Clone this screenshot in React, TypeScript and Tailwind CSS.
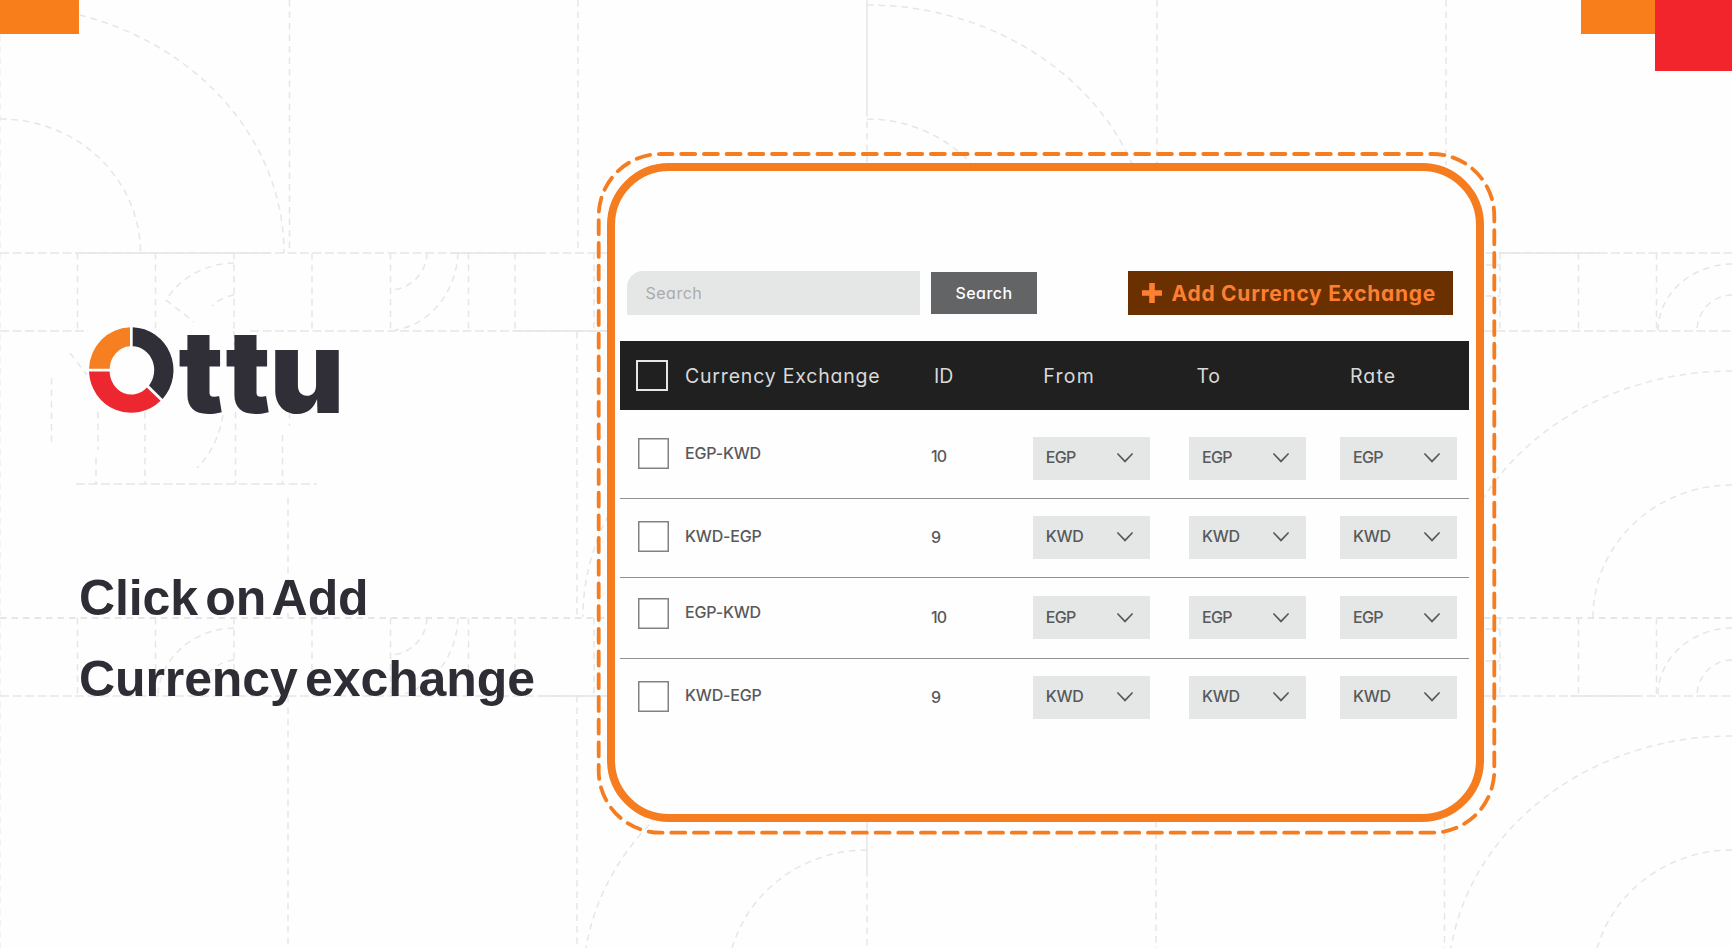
import React from "react";

const FONT = "font-[Inter,'Noto_Sans',sans-serif]";

function Grid() {
  const strip = [77.5, 155.5, 234, 312, 390.5, 468.5, 515, 594, 1500, 1578.5, 1656.5];
  return (
    <svg className="absolute inset-0" width="1732" height="948" viewBox="0 0 1732 948" fill="none" stroke="#e6e6e7" strokeWidth="1.5" strokeDasharray="6.5 5">
      {[289.5, 578].map((x) => <path key={x} d={`M${x} 0V253`} />)}
      {[1157, 1446].map((x) => <path key={x} d={`M${x} 0V165`} />)}
      <path d="M867 0V110" strokeDasharray="none" />
      <path d="M867 110V163" />
      <path d="M0 0V948" strokeWidth="1" />
      <path d="M577 332V617M577 696V948M288 498V617M288 696V948M867 870V948M1156 821V948M1444.5 821V948" />
      <path d="M867 821V870" strokeDasharray="none" />
      <path d="M0 253H607M1486 253H1732M0 331H88M250 331H607M1484 331H1732M76 484H317M0 696H607M1484 696H1732" strokeDasharray="9 3.5" />
      <path d="M80 253H270M450 253H540M515 331H607M1500 253H1600M540 696H607M1570 696H1640" strokeDasharray="none" />
      <path d="M0 618H607M1484 618H1732" strokeWidth="2" />
      {strip.map((x) => <path key={x} d={`M${x} 253V331M${x} 618V696`} />)}
      <path d="M0 119A140 134 0 0 1 140.5 253M0 5A284 248 0 0 1 284 253" />
      <path d="M867 119A140 134 0 0 1 1007 253M867 5A284 248 0 0 1 1151 253" />
      <path d="M1732 371A284 246 0 0 0 1448 617M1732 485A139 132 0 0 0 1593 617M867 371A284 246 0 0 0 583 617" />
      <path d="M867 736A284 248 0 0 0 583 984M867 850A140 134 0 0 0 727 984M1732 736A284 248 0 0 0 1448 984M1732 850A140 134 0 0 0 1592 984" />
      <path d="M234 263A80 75 0 0 0 166 300L194 322M234 295A40 36 0 0 0 212 306M234 331V345" />
      <path d="M427 253A38 38 0 0 1 390 290M458 253A72 82 0 0 1 395 330" />
      <path d="M427 618A38 38 0 0 1 390 655M458 618A72 82 0 0 1 395 696" />
      <path d="M234 628A78 70 0 0 0 158 696M234 660A40 36 0 0 0 200 690" />
      <path d="M1732 264A75 67 0 0 0 1658 331M1732 295A35 36 0 0 0 1697 331M1732 628A75 67 0 0 0 1658 696M1732 660A35 36 0 0 0 1697 696" />
      <path d="M1486 265H1500M1486 296H1500M1486 629H1500M1486 661H1500" />
      <path d="M51.5 378V443M98 412V450M96 458V484M145 412V484M235.5 412V484M282.5 435V484M289.5 412V426M223 415A70 90 0 0 1 197 468M70 353L87 375" />
    </svg>
  );
}

function Logo() {
  return (
    <svg className="block" width="280" height="190" viewBox="85 270 280 190" role="img" aria-label="Ottu">
      <path fill="#f68021" d="M89 368.7A42.3 43 0 0 1 130 327.2V346.3A21.5 23.7 0 0 0 109.6 368.7Z" />
      <path fill="#ec272f" d="M89 371.6H109.6A21.7 23.7 0 0 0 146.8 387.4L160.6 400.8A42.3 43 0 0 1 89 371.6Z" />
      <path fill="#302f38" d="M132.7 327.2A42.3 43 0 0 1 162.6 399L149 385.4A21.7 23.7 0 0 0 132.7 346.3Z" />
      <g fill="#302f38" fontFamily="Inter" fontWeight="900" fontSize="115">
        <text x="178.5" y="413" textLength="45" lengthAdjust="spacingAndGlyphs">t</text>
        <text x="225.5" y="413" textLength="45" lengthAdjust="spacingAndGlyphs">t</text>
        <text x="269.5" y="413" textLength="75" lengthAdjust="spacingAndGlyphs">u</text>
      </g>
    </svg>
  );
}

function Select({ value }: { value: string }) {
  return (
    <div className="flex h-[43px] w-[117px] items-center justify-between bg-[#e5e7e6] pl-[13px] pr-[17px]">
      <span className={`relative -top-px text-[16px] leading-none ${value === "EGP" ? "tracking-[-0.7px]" : "tracking-[-0.3px]"}`}>{value}</span>
      <svg width="16" height="10" viewBox="0 0 16 10" fill="none" stroke="#58595b" strokeWidth="1.7" strokeLinecap="round">
        <path d="M0.9 1L8 8.4L15.1 1" />
      </svg>
    </div>
  );
}

const rows = [
  { from: "EGP", to: "KWD", id: "10", row: "h-[89px] border-b", box: "mt-[28px]", name: "mt-[33px]", num: "mt-[36px]", sel: "mt-[26.5px]" },
  { from: "KWD", to: "EGP", id: "9", row: "h-[79px] border-b", box: "mt-[22px]", name: "mt-[26.5px]", num: "mt-[28px]", sel: "mt-[16.7px]" },
  { from: "EGP", to: "KWD", id: "10", row: "h-[81px] border-b", box: "mt-[20px]", name: "mt-[24px]", num: "mt-[29px]", sel: "mt-[18px]" },
  { from: "KWD", to: "EGP", id: "9", row: "h-[81px]", box: "mt-[21.5px]", name: "mt-[26px]", num: "mt-[28px]", sel: "mt-[16.5px]" },
];

const COLS = "grid grid-cols-[65px_246px_101.7px_156.3px_151px_1fr]";

export default function App() {
  return (
    <div className={`relative flex h-[948px] w-[1732px] overflow-hidden bg-[#fefefe] ${FONT}`}>
      <Grid />
      <div className="absolute left-0 top-0 h-[33.5px] w-[78.5px] bg-[#f87e1b]" />
      <div className="absolute right-0 top-0 flex items-start">
        <div className="h-[33.5px] w-[74px] bg-[#f87e1b]" />
        <div className="h-[70.5px] w-[77px] bg-[#f1252b]" />
      </div>

      <section className="relative w-[607px] shrink-0 pl-[79px] pt-[270px]">
        <div className="pl-[6px]"><Logo /></div>
        <h1 className="mt-[98px] whitespace-nowrap font-['Liberation_Sans',Arial,sans-serif] text-[50px] font-bold leading-[81px] tracking-[-0.1px] text-[#2e2d36] [word-spacing:-6.5px]">
          Click on Add<br />Currency exchange
        </h1>
      </section>

      <main className="relative mt-[163px] h-[659px] w-[877px] shrink-0 rounded-[62px] border-[8px] border-[#f67c20] bg-[#fefefe] text-[#58595b]">
        <svg className="absolute -left-[20px] -top-[20px]" width="905" height="690" viewBox="595 151 905 690" fill="none">
          <rect x="598.7" y="154" width="895.6" height="678.7" rx="62" stroke="#f67c20" strokeWidth="3.8" strokeDasharray="14 8.7" strokeDashoffset="2.2" strokeLinecap="round" />
        </svg>

        <div className="relative flex items-start pl-[12px] pt-[100px]">
          <div className="flex h-[43.5px] w-[292.5px] items-center rounded-tl-[16px] bg-[#e5e7e6] pl-[18.5px]">
            <span className="pt-px text-[16px] leading-none tracking-[0.5px] text-[#a9abae] [font-feature-settings:'cv11']">Search</span>
          </div>
          <button className="ml-[11.5px] mt-px h-[41.5px] w-[106px] bg-[#636466] pt-px text-[16px] font-medium leading-none tracking-[0.45px] text-white [font-feature-settings:'cv11']">Search</button>
          <button className="ml-[91px] flex h-[43.5px] w-[325px] items-center bg-[#6b3000] pl-[13.5px] text-[#fd7f32]">
            <svg width="20" height="20" viewBox="0 0 20 20" fill="currentColor"><path d="M7.2 0h5.6v7.2H20v5.6h-7.2V20H7.2v-7.2H0V7.2h7.2z" /></svg>
            <span className="ml-[10px] whitespace-nowrap pt-px text-[21px] font-bold leading-none tracking-[0.73px] [font-feature-settings:'cv11']">Add Currency Exchange</span>
          </button>
        </div>

        <div className="relative ml-[5px] mt-[26.5px] w-[849px]">
          <div className={`${COLS} h-[69px] items-center bg-[#202020] text-[19.5px] leading-none text-[#d9d9d9] [font-feature-settings:'cv11']`}>
            <div className="ml-[16px] h-[31.5px] w-[31.5px] border-2 border-[#e6e6e6]" />
            <span className="pt-[2px] tracking-[0.8px]">Currency Exchange</span>
            <span className="pl-[3px] pt-[2px]">ID</span>
            <span className="pl-[10.5px] pt-[2px] tracking-[1.3px]">From</span>
            <span className="pl-[7.5px] pt-[2px] tracking-[0.6px]">To</span>
            <span className="pl-[10px] pt-[2px] tracking-[1.1px]">Rate</span>
          </div>
          {rows.map((r, i) => (
            <div key={i} className={`${COLS} items-start border-[#8f9194] font-[450] ${r.row}`}>
              <div className={`ml-[17.5px] h-[31px] w-[31px] bg-white p-[1.5px] shadow-[inset_0_0_0_1.5px_#808285] ${r.box}`} />
              <span className={`text-[16px] leading-[20px] tracking-[-0.2px] ${r.name}`}>{r.from}-{r.to}</span>
              <span className={`text-[16px] leading-[20px] tracking-[-0.8px] ${r.num}`}>{r.id}</span>
              {[0, 1, 2].map((c) => <div key={c} className={r.sel}><Select value={r.from} /></div>)}
            </div>
          ))}
        </div>
      </main>
    </div>
  );
}
